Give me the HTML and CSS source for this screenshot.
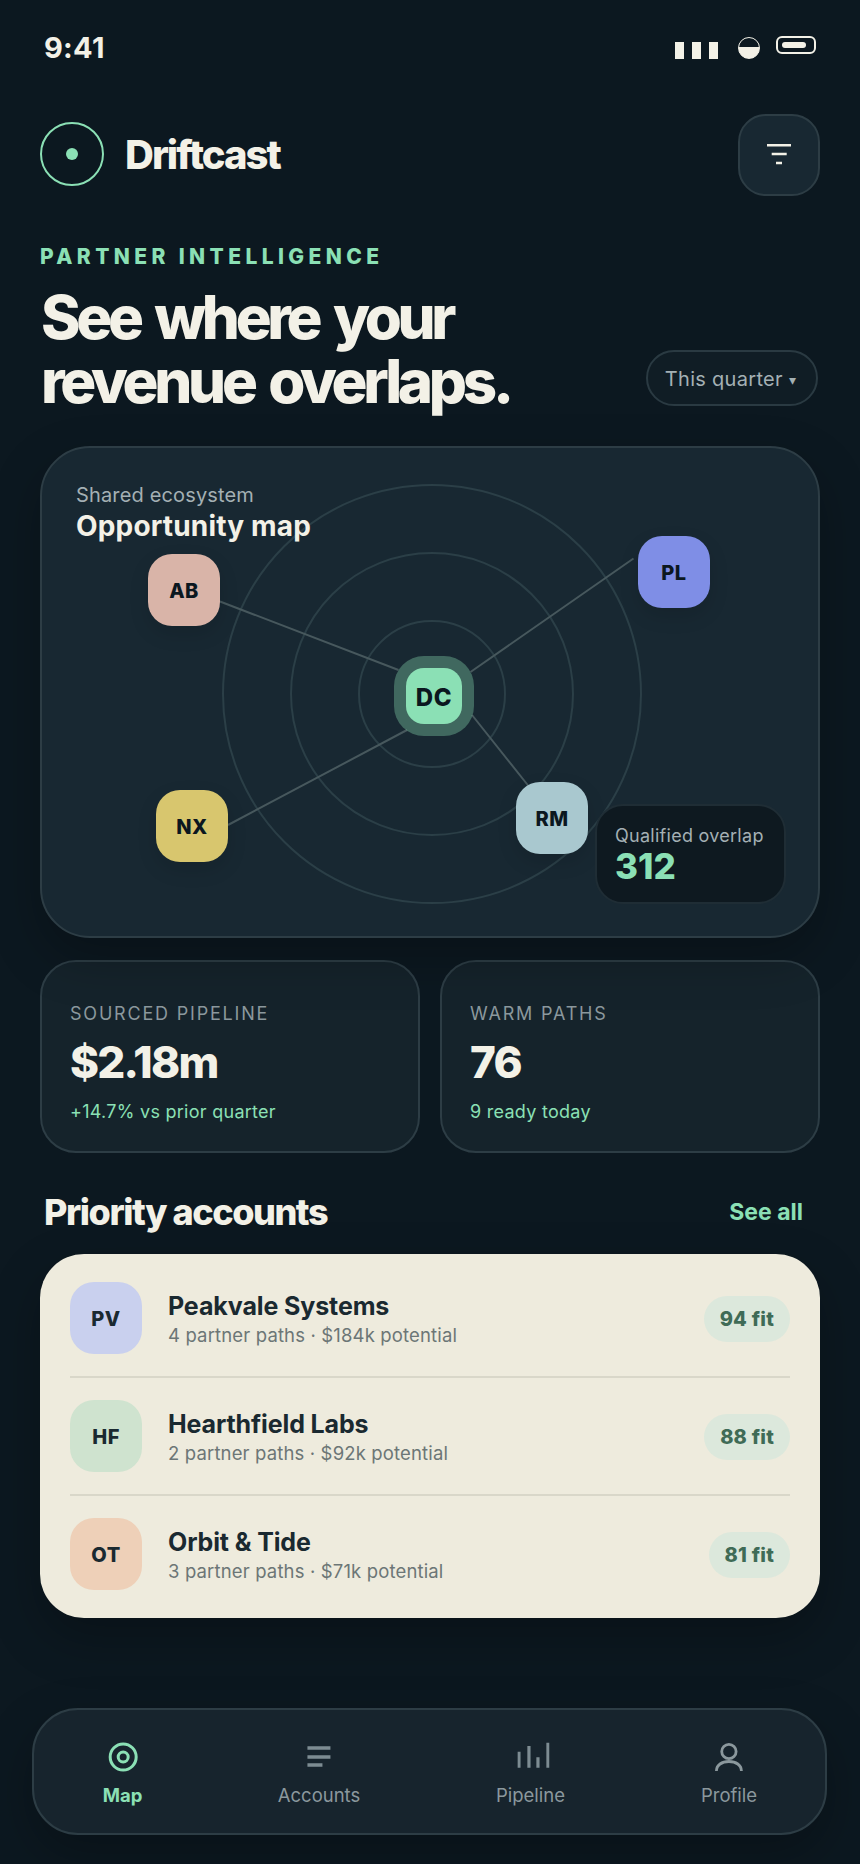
FILE: index.html
```html
<!DOCTYPE html>
<html lang="en">
<head>
<meta charset="utf-8">
<title>Driftcast</title>
<link rel="stylesheet" href="styles.css">
</head>
<body>
<div class="screen">
  <div class="status">
    <span class="time">9:41</span>
    <div class="status-icons">
      <span class="bars"><i></i><i></i><i></i></span>
      <span class="wifi"></span>
      <span class="battery"><i></i></span>
    </div>
  </div>

  <header class="top">
    <div class="brand">
      <span class="logo"><i></i></span>
      <span class="brand-name">Driftcast</span>
    </div>
    <button class="filter" aria-label="Filter">
      <svg width="24" height="22" viewBox="0 0 24 22"><path d="M0 1.300h24M4.700 10h15M9 19h6" stroke="#f3f1e7" stroke-width="2.600" fill="none"/></svg>
    </button>
  </header>

  <section class="hero">
    <div class="eyebrow">PARTNER INTELLIGENCE</div>
    <div class="hero-row">
      <h1>See where your<br>revenue overlaps.</h1>
      <button class="pill">This quarter <span class="caret">▾</span></button>
    </div>
  </section>

  <section class="map">
    <svg class="map-lines" width="780" height="492" viewBox="40 446 780 492" fill="none">
      <g stroke="#2b3f47" stroke-width="2">
        <circle cx="432" cy="694" r="209"/>
        <circle cx="432" cy="694" r="141"/>
        <circle cx="432" cy="694" r="73"/>
      </g>
      <g stroke="#47585d" stroke-width="2">
        <path d="M220 601.5 398.5 670M228 825 407 730M633.5 558.500 470.500 672M472 715 528.500 786"/>
      </g>
    </svg>
    <div class="map-head">
      <div class="map-sub">Shared ecosystem</div>
      <div class="map-title">Opportunity map</div>
    </div>
    <div class="node node-ab">AB</div>
    <div class="node node-pl">PL</div>
    <div class="node node-nx">NX</div>
    <div class="node node-rm">RM</div>
    <div class="node node-dc">DC</div>
    <div class="overlap">
      <div class="overlap-label">Qualified overlap</div>
      <div class="overlap-value">312</div>
    </div>
  </section>

  <section class="stats">
    <article class="stat">
      <div class="stat-label">SOURCED PIPELINE</div>
      <div class="stat-value">$2.18m</div>
      <div class="stat-note">+14.7% vs prior quarter</div>
    </article>
    <article class="stat">
      <div class="stat-label">WARM PATHS</div>
      <div class="stat-value">76</div>
      <div class="stat-note">9 ready today</div>
    </article>
  </section>

  <div class="section-head">
    <h2>Priority accounts</h2>
    <a class="see-all">See all</a>
  </div>

  <section class="accounts">
    <div class="row">
      <div class="avatar av-pv">PV</div>
      <div class="info">
        <div class="name">Peakvale Systems</div>
        <div class="meta">4 partner paths · $184k potential</div>
      </div>
      <div class="fit">94 fit</div>
    </div>
    <div class="row">
      <div class="avatar av-hf">HF</div>
      <div class="info">
        <div class="name">Hearthfield Labs</div>
        <div class="meta">2 partner paths · $92k potential</div>
      </div>
      <div class="fit">88 fit</div>
    </div>
    <div class="row">
      <div class="avatar av-ot">OT</div>
      <div class="info">
        <div class="name">Orbit &amp; Tide</div>
        <div class="meta">3 partner paths · $71k potential</div>
      </div>
      <div class="fit">81 fit</div>
    </div>
  </section>

  <nav class="nav">
    <div class="tab tab-map">
      <svg width="32" height="32" viewBox="0 0 32 32" fill="none" stroke="#8be0b5" stroke-width="3"><circle cx="16" cy="16" r="13"/><circle cx="16" cy="16" r="5"/></svg>
      <span>Map</span>
    </div>
    <div class="tab tab-accounts">
      <svg width="32" height="32" viewBox="0 0 32 32" fill="none" stroke="#7d8c92" stroke-width="3.500"><path d="M4.700 7h23M4.700 16h23M4.700 24h15"/></svg>
      <span>Accounts</span>
    </div>
    <div class="tab tab-pipeline">
      <svg width="32" height="32" viewBox="0 0 32 32" fill="none" stroke="#7d8c92" stroke-width="3.200"><path d="M1.500 26.700V10.700M11.500 26.700V5M20.500 26.700V16.300M30.500 26.700V1.700"/></svg>
      <span>Pipeline</span>
    </div>
    <div class="tab tab-profile">
      <svg width="32" height="32" viewBox="0 0 32 32" fill="none" stroke="#8b989d" stroke-width="2.800"><circle cx="16" cy="10.500" r="7.200"/><path d="M3.500 30c0-6 5.500-9.500 12.500-9.500s12.500 3.500 12.500 9.500"/></svg>
      <span>Profile</span>
    </div>
  </nav>
</div>
</body>
</html>
```
FILE: styles.css
```css
* { box-sizing: border-box; }
html, body { margin: 0; padding: 0; }
body {
  background: #0c1820;
  font-family: Inter, "Liberation Sans", sans-serif;
  color: #f3f1e7;
}
.screen {
  position: relative;
  width: 860px;
  height: 1864px;
  overflow: hidden;
  padding: 0 40px;
  display: flex;
  flex-direction: column;
  background: #0c1820;
}

.status {
  height: 114px;
  padding: 28px 4px 0;
  display: flex;
  justify-content: space-between;
  align-items: flex-start;
}
.time { font-size: 29px; letter-spacing: 0.01em; font-weight: 700; line-height: 40px; }
.status-icons { display: flex; align-items: flex-start; padding-top: 8px; }
.bars { display: flex; gap: 8px; margin-top: 6px; }
.bars i { display: block; width: 9px; height: 17px; background: #f3f1e7; }
.wifi {
  width: 22px; height: 22px; margin: 1px 0 0 20px;
  border-radius: 50%;
  border: 1px solid #f3f1e7;
  background: linear-gradient(180deg, transparent 46%, #f3f1e7 46%);
}
.battery {
  width: 40px; height: 18px; margin-left: 16px;
  border: 2px solid #f3f1e7; border-radius: 6px;
  padding: 4px;
  display: flex;
}
.battery i { display: block; width: 24px; height: 6px; background: #f3f1e7; border-radius: 3px; }

.top { display: flex; justify-content: space-between; align-items: center; height: 82px; }
.brand { display: flex; align-items: center; gap: 21px; padding-bottom: 2px; }
.logo {
  width: 64px; height: 64px; border-radius: 50%;
  border: 2px solid #8be0b5;
  display: flex; align-items: center; justify-content: center;
}
.logo i { width: 12px; height: 12px; border-radius: 50%; background: #8be0b5; }
.brand-name { font-size: 40px; font-weight: 800; letter-spacing: -0.05em; line-height: 48px; margin-top: 2px; }
.filter {
  width: 82px; height: 82px; border-radius: 28px;
  background: #182832; border: 2px solid #2d3d45;
  padding: 0; display: flex; align-items: center; justify-content: center;
}

.hero { margin-top: 49px; }
.eyebrow { font-size: 21px; font-weight: 800; letter-spacing: 4.4px; color: #8be0b5; line-height: 24px; }
.hero-row { display: flex; justify-content: space-between; align-items: flex-end; margin-top: 16px; }
h1 {
  margin: 0 0 0 1px; font-size: 60px; line-height: 64px; font-weight: 800;
  letter-spacing: -4.3px; word-spacing: 5.75px; color: #f3f1e7;
}
.pill {
  width: 172px; height: 56px; border-radius: 28px; margin: 0 2px 7px 0;
  background: #101d25; border: 2px solid #2a3a42;
  color: #a4b0b4; font: 400 20px Inter, sans-serif; letter-spacing: 0.015em;
  display: flex; align-items: center; justify-content: center; gap: 6px; padding: 2px 3px 0 0;
}
.caret { font-size: 14px; }

.map {
  position: relative;
  margin-top: 33px;
  height: 492px;
  border-radius: 50px;
  border: 2px solid #2d3d45;
  background: #182832;
  box-shadow: 0 20px 50px rgba(0, 0, 0, .25);
  padding: 34px;
}
.map-lines { position: absolute; left: -2px; top: -2px; }
.map-head { position: relative; }
.map-sub { font-size: 20px; line-height: 26px; color: #a4b0b4; letter-spacing: 0.0075em; }
.map-title { font-size: 28px; line-height: 36px; font-weight: 700; color: #f3f1e7; letter-spacing: 0.006em; }
.node {
  position: absolute; width: 72px; height: 72px; border-radius: 24px;
  display: flex; align-items: center; justify-content: center;
  padding-top: 2px;
  font-size: 20px; font-weight: 850; color: #0b171f; letter-spacing: 0.025em;
  box-shadow: 0 8px 20px rgba(0, 0, 0, .12);
}
.node-ab { left: 106px; top: 106px; background: #d9b4a8; }
.node-pl { left: 596px; top: 88px; background: #7f8ee6; }
.node-nx { left: 114px; top: 342px; background: #d8c66e; }
.node-rm { left: 474px; top: 334px; background: #a9c8cf; }
.node-dc {
  left: 364px; top: 220px; width: 56px; height: 56px; border-radius: 18px;
  background: #8be0b5; font-size: 24px;
  box-shadow: 0 0 0 12px rgba(139, 224, 181, .35);
}
.overlap {
  position: absolute; left: 553px; top: 356px; width: 191px; height: 100px;
  border-radius: 28px; border: 2px solid #1f2d35; background: #0e1920;
  padding: 19px 18px 0;
}
.overlap-label { font-size: 18px; line-height: 22px; color: #a4b0b4; letter-spacing: 0.015em; }
.overlap-value { font-size: 35px; line-height: 38px; font-weight: 800; color: #8be0b5; }

.stats { display: grid; grid-template-columns: 1fr 1fr; gap: 20px; margin-top: 22px; }
.stat {
  height: 193px; border-radius: 36px; border: 2px solid #2d3d45;
  background: #15232b; padding: 40px 28px 0;
}
.stat-label { font-size: 18px; line-height: 24px; letter-spacing: 0.1em; color: #8b989d; }
.stat-value { font-size: 44px; line-height: 56px; font-weight: 800; letter-spacing: -0.04em; margin-top: 8px; }
.stat-note { font-size: 18px; line-height: 24px; color: #8be0b5; margin-top: 10px; letter-spacing: 0.015em; }

.section-head { display: flex; justify-content: space-between; align-items: center; height: 48px; margin-top: 35px; padding: 0 17px 0 4px; }
h2 { margin: 0; font-size: 36px; line-height: 44px; font-weight: 800; letter-spacing: -0.04em; }
.see-all { font-size: 23px; font-weight: 700; color: #8be0b5; }

.accounts {
  margin-top: 18px; background: #eeebdd; border-radius: 44px;
  padding: 6px 30px; box-shadow: 0 20px 50px rgba(0, 0, 0, .25);
}
.row { display: flex; align-items: center; height: 118px; border-bottom: 2px solid #d9d7c9; }
.row:last-child { border-bottom: 0; height: 116px; }
.avatar {
  width: 72px; height: 72px; border-radius: 24px; flex: none;
  display: flex; align-items: center; justify-content: center;
  padding-top: 2px;
  font-size: 20px; font-weight: 850; color: #1a2930; letter-spacing: 0.025em;
}
.av-pv { background: #c9d0ee; }
.av-hf { background: #cfe3cf; }
.av-ot { background: #eed0b8; }
.info { flex: 1; margin-left: 26px; padding-top: 4px; }
.name { font-size: 25px; line-height: 30px; font-weight: 700; color: #1a2930; letter-spacing: -0.005em; }
.meta { font-size: 18.500px; line-height: 29px; color: #6c7676; letter-spacing: 0.008em; }
.fit {
  height: 46px; padding: 0 16px; border-radius: 23px; margin-top: 2px;
  background: #dce8dc; color: #3f6b56;
  font-size: 20px; font-weight: 800; line-height: 46px; letter-spacing: 0.01em;
}

.nav {
  position: absolute; left: 32px; top: 1708px; width: 795px; height: 127px;
  border-radius: 46px; border: 2px solid #2d3d45; background: #17242d;
  box-shadow: 0 20px 50px rgba(0, 0, 0, .25);
}
.tab {
  position: absolute; top: 31px; display: flex; flex-direction: column; align-items: center;
  transform: translateX(-50%);
  font-size: 18.500px; color: #8b989d; gap: 10px; line-height: 24px;
}
.tab-map { left: 88.500px; color: #8be0b5; font-weight: 700; }
.tab-map svg { margin-left: 1px; }
.tab-accounts { left: 285px; }
.tab-pipeline { left: 496.500px; }
.tab-pipeline svg { margin-left: 5px; }
.tab-profile { left: 695px; }
```
